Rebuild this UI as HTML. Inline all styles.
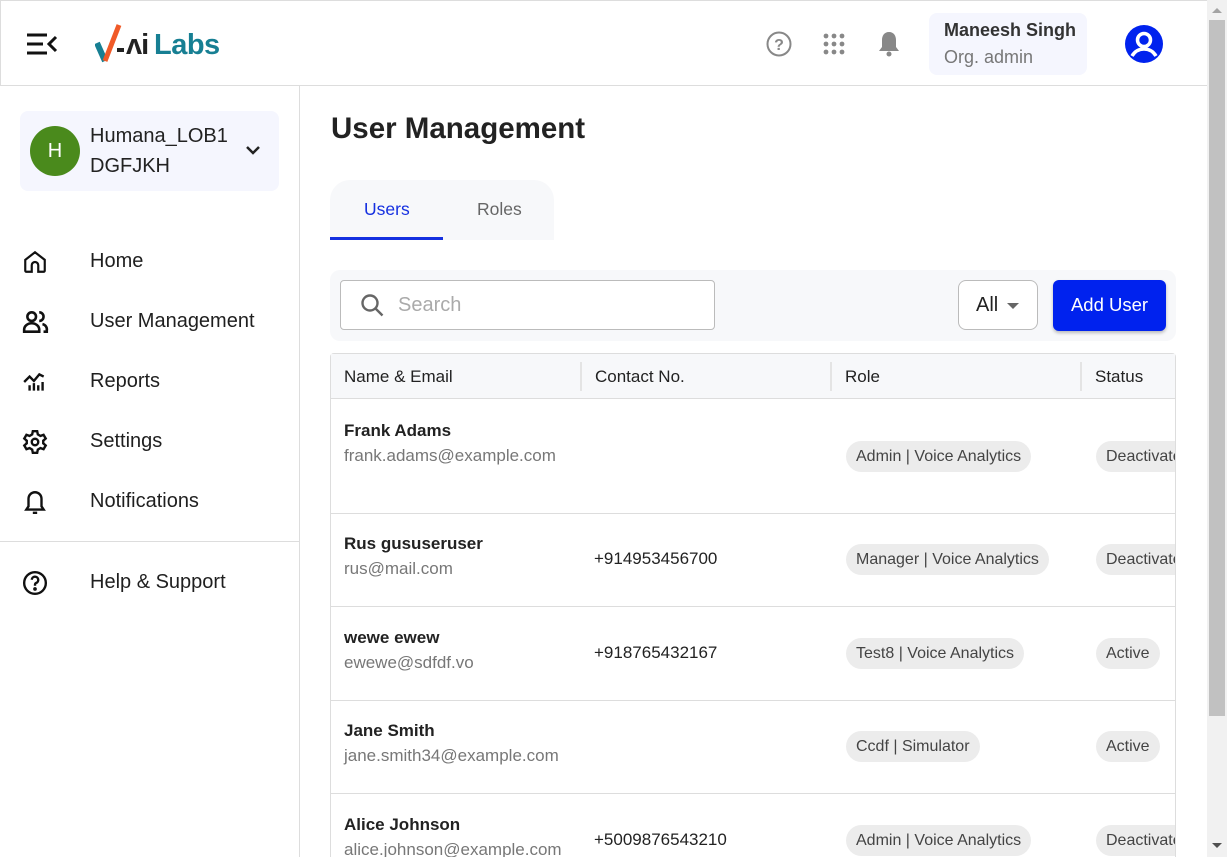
<!DOCTYPE html>
<html style="overflow:hidden;height:857px"><head><meta charset="utf-8"><style>
*{box-sizing:border-box;margin:0;padding:0}
body{width:1227px;height:857px;overflow:hidden;font-family:"Liberation Sans",sans-serif;background:#fff;position:relative;color:#1f1f1f}
.abs{position:absolute}
.hdr{left:0;top:0;width:1207px;height:86px;border:1px solid #ddd;border-right:none;background:#fff}
.side{left:0;top:86px;width:300px;height:771px;border-right:1px solid #ddd}
.nav{position:absolute;left:0;width:300px;height:40px;font-size:20px;color:#1f1f1f}
.nav svg{position:absolute;left:22px;top:8px}
.nav span{position:absolute;left:90px;top:9px}
.th{position:absolute;top:0;height:45px;font-size:17px;line-height:45px;padding-left:13px;color:#222}
.row{position:absolute;left:331px;width:844px;border-bottom:1px solid #ddd}
.nm{position:absolute;left:13px;font-size:17px;font-weight:bold;color:#222}
.em{position:absolute;left:13px;font-size:17px;color:#777}
.ph{position:absolute;left:263px;font-size:17px;color:#222}
.chip{position:absolute;height:31px;line-height:31px;border-radius:16px;background:#ececec;padding:0 10px;font-size:16px;color:#444;white-space:nowrap}
</style></head><body>
<div class="abs hdr">
 <svg class="abs" style="left:25px;top:32px" width="32" height="22" viewBox="0 0 32 22"><path d="M1 2h20M1 11h16M1 20h20M30 4l-7 7 7 7" stroke="#111" stroke-width="3" fill="none"/></svg>
 <svg class="abs" style="left:94px;top:22px" width="40" height="42" viewBox="0 0 40 42"><path d="M2 20l8 18" stroke="#177f93" stroke-width="6" fill="none"/><path d="M10 38l14-36" stroke="#f05a28" stroke-width="5" fill="none"/><path d="M22 27h7" stroke="#222" stroke-width="4"/></svg>
 <div class="abs" style="left:125px;top:28px;font-size:29px;font-weight:bold;color:#222;letter-spacing:-1px">ʌi</div>
 <div class="abs" style="left:153px;top:28px;font-size:29px;font-weight:bold;color:#177f93;letter-spacing:-0.5px">Labs</div>
 <svg class="abs" style="left:765px;top:30px" width="26" height="26" viewBox="0 0 26 26"><circle cx="13" cy="13" r="11.5" stroke="#888" stroke-width="2" fill="none"/><text x="13" y="19" font-size="16" text-anchor="middle" fill="#888" font-family="Liberation Sans" font-weight="bold">?</text></svg>
 <svg class="abs" style="left:822px;top:32px" width="22" height="22" viewBox="0 0 22 22" fill="#888"><circle cx="3" cy="3" r="2.4"/><circle cx="11" cy="3" r="2.4"/><circle cx="19" cy="3" r="2.4"/><circle cx="3" cy="11" r="2.4"/><circle cx="11" cy="11" r="2.4"/><circle cx="19" cy="11" r="2.4"/><circle cx="3" cy="19" r="2.4"/><circle cx="11" cy="19" r="2.4"/><circle cx="19" cy="19" r="2.4"/></svg>
 <svg class="abs" style="left:877px;top:29px" width="22" height="28" viewBox="0 0 22 28" fill="#888"><path d="M11 2c-5 0-7 4-7 8v7l-3 4h20l-3-4v-7c0-4-2-8-7-8z"/><circle cx="11" cy="24" r="2.5"/></svg>
 <div class="abs" style="left:928px;top:12px;width:158px;height:62px;background:#f5f6fe;border-radius:8px">
  <div class="abs" style="left:15px;top:7px;font-size:18px;font-weight:bold;color:#333">Maneesh Singh</div>
  <div class="abs" style="left:15px;top:34px;font-size:18px;color:#777">Org. admin</div>
 </div>
 <svg class="abs" style="left:1124px;top:24px" width="38" height="38" viewBox="0 0 38 38"><circle cx="19" cy="19" r="19" fill="#0022ee"/><circle cx="19" cy="15" r="6.5" fill="none" stroke="#fff" stroke-width="3.5"/><path d="M7 31c3-5 7-7 12-7s9 2 12 7" fill="none" stroke="#fff" stroke-width="3.5"/></svg>
</div>
<div class="abs" style="left:1207px;top:0;width:20px;height:857px;background:#f1f1f1"></div>
<div class="abs" style="left:1209px;top:20px;width:16px;height:696px;background:#c1c1c1"></div>
<div class="abs" style="left:1212px;top:8px;width:0;height:0;border-left:5px solid transparent;border-right:5px solid transparent;border-bottom:5px solid #a3a3a3"></div>
<div class="abs" style="left:1212px;top:843px;width:0;height:0;border-left:5px solid transparent;border-right:5px solid transparent;border-top:5px solid #505050"></div>

<div class="abs side">
 <div class="abs" style="left:20px;top:25px;width:259px;height:80px;background:#f5f6fe;border-radius:8px">
  <div class="abs" style="left:10px;top:15px;width:50px;height:50px;border-radius:50%;background:#4a8a1c;color:#fff;font-size:20px;text-align:center;line-height:50px">H</div>
  <div class="abs" style="left:70px;top:10px;font-size:20px;color:#222;line-height:30px">Humana_LOB1<br>DGFJKH</div>
  <svg class="abs" style="left:226px;top:35px" width="14" height="9" viewBox="0 0 14 9"><path d="M1 1l6 6 6-6" stroke="#222" stroke-width="2.5" fill="none"/></svg>
 </div>
 <div class="nav" style="top:155px"><svg width="26" height="26" viewBox="0 0 24 24" fill="none" stroke="#111" stroke-width="2"><path d="M3 10l9-7 9 7v10a1 1 0 0 1-1 1h-5v-6a3 3 0 0 0-6 0v6H4a1 1 0 0 1-1-1z"/></svg><span>Home</span></div>
 <div class="nav" style="top:215px"><svg width="28" height="26" viewBox="0 0 26 24" fill="none" stroke="#111" stroke-width="2.4"><circle cx="9" cy="7" r="4"/><path d="M2 21v-2a6 5 0 0 1 14 0v2z"/><path d="M16 3a4 4 0 0 1 0 8M19 14a5 5 0 0 1 4 6v1h-3"/></svg><span>User Management</span></div>
 <div class="nav" style="top:275px"><svg width="26" height="26" viewBox="0 0 24 24" fill="none" stroke="#111" stroke-width="2.2"><path d="M3 20v0M7 20v-5M11 20v-7M15 20v-5M19 20v-8M2 12l5-5 4 4 5-6 4 2"/></svg><span>Reports</span></div>
 <div class="nav" style="top:335px"><svg width="26" height="26" viewBox="0 0 24 24" fill="none" stroke="#111" stroke-width="2.2"><circle cx="12" cy="12" r="3"/><path d="M10 2h4l.6 3 2.4 1.4 2.9-1 2 3.4-2.3 2v2.4l2.3 2-2 3.4-2.9-1L14.6 19 14 22h-4l-.6-3L7 17.6l-2.9 1-2-3.4 2.3-2v-2.4l-2.3-2 2-3.4 2.9 1L9.4 5z"/></svg><span>Settings</span></div>
 <div class="nav" style="top:395px"><svg width="26" height="26" viewBox="0 0 24 24" fill="none" stroke="#111" stroke-width="2.2"><path d="M12 3a6 6 0 0 0-6 6v7l-2 3h16l-2-3V9a6 6 0 0 0-6-6zM10 22h4"/></svg><span>Notifications</span></div>
 <div class="abs" style="left:0;top:455px;width:299px;height:1px;background:#ddd"></div>
 <div class="nav" style="top:476px"><svg width="26" height="26" viewBox="0 0 24 24" fill="none" stroke="#111" stroke-width="2.2"><circle cx="12" cy="12" r="10"/><path d="M9 9a3 3 0 1 1 4 3c-1 .5-1 1-1 2.5"/><circle cx="12" cy="17.5" r=".6" fill="#111"/></svg><span>Help &amp; Support</span></div>
</div>

<div class="abs" style="left:331px;top:112px;font-size:29.5px;font-weight:bold;color:#222">User Management</div>
<div class="abs" style="left:330px;top:180px;width:224px;height:60px;background:#f7f8fa;border-radius:20px 20px 0 0"></div>
<div class="abs" style="left:364px;top:199px;font-size:17.5px;color:#1530e0">Users</div>
<div class="abs" style="left:477px;top:199px;font-size:17.5px;color:#666">Roles</div>
<div class="abs" style="left:330px;top:237px;width:113px;height:3px;background:#1530e0"></div>

<div class="abs" style="left:330px;top:270px;width:846px;height:71px;background:#f7f8fa;border-radius:10px"></div>
<div class="abs" style="left:340px;top:280px;width:375px;height:50px;background:#fff;border:1px solid #bbb;border-radius:4px">
 <svg class="abs" style="left:19px;top:12px" width="26" height="26" viewBox="0 0 26 26" fill="none" stroke="#666" stroke-width="2.4"><circle cx="10" cy="10" r="7.5"/><path d="M15.5 15.5l7 7"/></svg>
 <div class="abs" style="left:57px;top:13px;font-size:20px;color:#aaa">Search</div>
</div>
<div class="abs" style="left:958px;top:280px;width:80px;height:50px;background:#fff;border:1px solid #bbb;border-radius:8px">
 <div class="abs" style="left:17px;top:13px;font-size:20px;color:#222">All</div>
 <div class="abs" style="left:48px;top:22px;width:0;height:0;border-left:6px solid transparent;border-right:6px solid transparent;border-top:6px solid #666"></div>
</div>
<div class="abs" style="left:1053px;top:280px;width:113px;height:51px;background:#0022ee;border-radius:6px;color:#fff;font-size:18.5px;text-align:center;line-height:50px;box-shadow:0 2px 3px rgba(0,0,0,.25)">Add User</div>

<div class="abs" style="left:330px;top:353px;width:846px;height:504px;border:1px solid #ddd;border-bottom:none;border-radius:4px 4px 0 0"></div>
<div class="abs" style="left:331px;top:354px;width:844px;height:45px;background:#f7f8fa;border-bottom:1px solid #ddd">
 <div class="th" style="left:0">Name &amp; Email</div>
 <div class="th" style="left:249px;border-left:2px solid #e4e4e4;height:29px;top:8px;line-height:29px">Contact No.</div>
 <div class="th" style="left:499px;border-left:2px solid #e4e4e4;height:29px;top:8px;line-height:29px">Role</div>
 <div class="th" style="left:749px;border-left:2px solid #e4e4e4;height:29px;top:8px;line-height:29px">Status</div>
</div>
<div class="abs" style="left:331px;top:399px;width:844px;height:458px;overflow:hidden">
 <div class="row" style="left:0;top:0;height:115px"><div class="nm" style="top:22px">Frank Adams</div><div class="em" style="top:47px">frank.adams@example.com</div><div class="chip" style="left:515px;top:42px">Admin | Voice Analytics</div><div class="chip" style="left:765px;top:42px">Deactivated</div></div>
 <div class="row" style="left:0;top:115px;height:93px"><div class="nm" style="top:20px">Rus gususeruser</div><div class="em" style="top:45px">rus@mail.com</div><div class="ph" style="top:35px">+914953456700</div><div class="chip" style="left:515px;top:30px">Manager | Voice Analytics</div><div class="chip" style="left:765px;top:30px">Deactivated</div></div>
 <div class="row" style="left:0;top:208px;height:94px"><div class="nm" style="top:21px">wewe ewew</div><div class="em" style="top:46px">ewewe@sdfdf.vo</div><div class="ph" style="top:36px">+918765432167</div><div class="chip" style="left:515px;top:31px">Test8 | Voice Analytics</div><div class="chip" style="left:765px;top:31px">Active</div></div>
 <div class="row" style="left:0;top:302px;height:93px"><div class="nm" style="top:20px">Jane Smith</div><div class="em" style="top:45px">jane.smith34@example.com</div><div class="chip" style="left:515px;top:30px">Ccdf | Simulator</div><div class="chip" style="left:765px;top:30px">Active</div></div>
 <div class="row" style="left:0;top:395px;height:93px;border:none"><div class="nm" style="top:21px">Alice Johnson</div><div class="em" style="top:46px">alice.johnson@example.com</div><div class="ph" style="top:36px">+5009876543210</div><div class="chip" style="left:515px;top:31px">Admin | Voice Analytics</div><div class="chip" style="left:765px;top:31px">Deactivated</div></div>
</div>
</body></html>
